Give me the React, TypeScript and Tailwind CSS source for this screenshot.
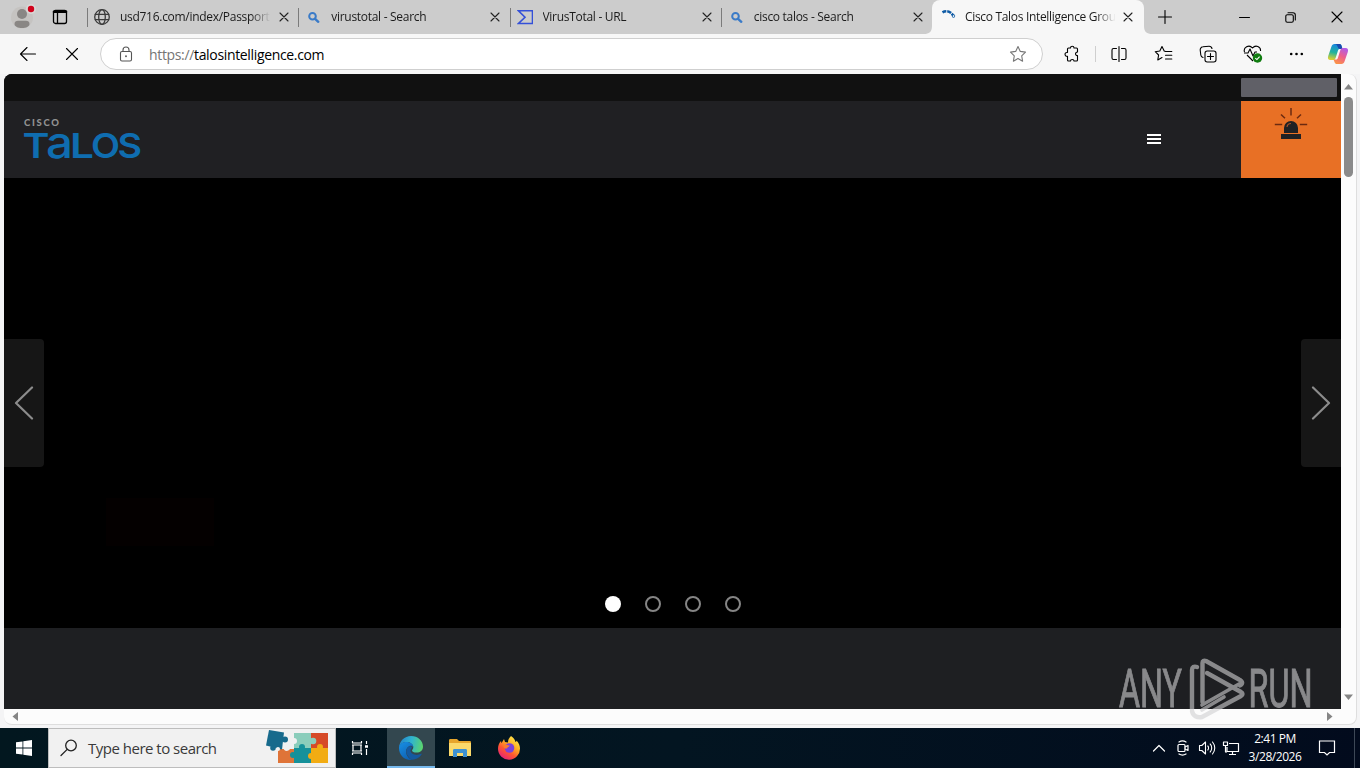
import type { ReactNode } from "react";

const tabs = [
  { title: "usd716.com/index/Passport/login", icon: "globe" },
  { title: "virustotal - Search", icon: "search" },
  { title: "VirusTotal - URL", icon: "vt" },
  { title: "cisco talos - Search", icon: "search" },
];

type LineProps = { w?: number; h?: number; sw?: number; className?: string; children: ReactNode };

// stroke icon, viewBox equals the pixel size
function Line({ w = 20, h = 20, sw = 1.1, className = "", children }: LineProps) {
  return (
    <svg
      width={w}
      height={h}
      viewBox={`0 0 ${w} ${h}`}
      fill="none"
      stroke="currentColor"
      strokeWidth={sw}
      strokeLinecap="round"
      strokeLinejoin="round"
      className={`shrink-0 ${className}`}
    >
      {children}
    </svg>
  );
}

function TabIcon({ name }: { name: string }) {
  if (name === "globe") {
    return (
      <Line w={16} h={16} sw={1.3} className="text-[#3b3b3b]">
        <circle cx="8" cy="8" r="7.3" />
        <ellipse cx="8" cy="8" rx="3.3" ry="7.3" />
        <path d="M1.3 5.4h13.4M1.3 10.6h13.4" />
      </Line>
    );
  }
  if (name === "search") {
    return (
      <Line w={16} h={16} sw={2} className="text-[#3a7bc8]">
        <circle cx="7.500" cy="7.200" r="3.300" />
        <path d="M10.100 9.800l3.200 3" strokeWidth="2.400" />
      </Line>
    );
  }
  return (
    <Line w={16} h={16} sw={1.6} className="text-[#3450d8]">
      <path d="M1.500 1.800h14v12.700h-14L8 8.200z" strokeLinejoin="miter" />
    </Line>
  );
}

function CloseX() {
  return (
    <Line w={10} h={10} className="text-[#222]">
      <path d="M1 1l8 8M9 1L1 9" />
    </Line>
  );
}

function TabStrip() {
  return (
    <div className="flex h-[34px] shrink-0 bg-[#cccccc]">
      <div className="flex w-[87px] shrink-0 items-center">
        <svg width="28" height="34" viewBox="0 0 28 34" className="ml-2">
          <circle cx="14" cy="17.5" r="11" fill="#c5c3c1" />
          <circle cx="14" cy="14" r="5" fill="#898684" />
          <path d="M6.500 24c0-2 1.500-3.200 3.500-3.200h8c2 0 3.500 1.200 3.500 3.200 0 2.500-3.500 4-7.500 4s-7.500-1.500-7.500-4z" fill="#898684" />
          <circle cx="23" cy="9" r="5" fill="#d9d7d5" />
          <circle cx="23" cy="9" r="3.2" fill="#d0021b" />
        </svg>
        <Line w={16} h={16} sw={1.3} className="ml-4 text-black">
          <rect x="1.500" y="1.500" width="13" height="13" rx="2" />
          <path d="M2 2.800h12" strokeWidth="2.600" />
          <path d="M5.500 4v10" />
        </Line>
      </div>

      {tabs.map((tab) => (
        <div key={tab.title} className="flex w-[211.25px] shrink-0 items-center">
          <div className="h-[19px] w-px bg-[#7b7b7b]" />
          <div className="ml-1.5 flex">
            <TabIcon name={tab.icon} />
          </div>
          <div className="ml-2.5 w-[152px] overflow-hidden text-[12px] tracking-[-0.29px] whitespace-nowrap text-[#1b1b1b] [mask-image:linear-gradient(to_right,black_86%,transparent_99%)]">
            {tab.title}
          </div>
          <div className="ml-[7px]">
            <CloseX />
          </div>
        </div>
      ))}

      <svg width="8" height="34" viewBox="0 0 8 34" className="-ml-2 shrink-0">
        <path d="M0 34c5 0 8-2 8-8v8z" fill="#f7f7f7" />
      </svg>
      <div className="flex w-[212px] shrink-0 items-center rounded-t-lg bg-[#f7f7f7]">
        <Line w={16} h={16} sw={2.6} className="ml-2 text-[#0f5ba5]">
          <path d="M2.500 3.300a7.500 7.500 0 0 1 10.500 3" strokeDasharray="4 .9" strokeLinecap="butt" />
          <circle cx="13.500" cy="7" r=".4" />
        </Line>
        <div className="ml-[9px] w-[152px] overflow-hidden text-[12px] tracking-[-0.32px] whitespace-nowrap text-[#1b1b1b] [mask-image:linear-gradient(to_right,black_86%,transparent_99%)]">
          Cisco Talos Intelligence Group
        </div>
        <div className="ml-1.5">
          <CloseX />
        </div>
      </div>
      <svg width="8" height="34" viewBox="0 0 8 34" className="shrink-0">
        <path d="M8 34c-5 0-8-2-8-8v8z" fill="#f7f7f7" />
      </svg>

      <div className="flex flex-1 items-center text-black">
        <Line w={14} h={14} className="ml-1.5">
          <path d="M7 .5v13M.5 7h13" />
        </Line>
        <div className="ml-auto flex items-center gap-[35px] pr-[17px]">
          <Line w={11} h={11} sw={1}>
            <path d="M.5 5.500h10" />
          </Line>
          <Line w={11} h={11} sw={1.1}>
            <rect x=".8" y="2.800" width="7.500" height="7.500" rx="1.500" />
            <path d="M3 .8h5a2.300 2.300 0 0 1 2.300 2.300V8" />
          </Line>
          <Line w={12} h={12} sw={1.1}>
            <path d="M1 1l10 10M11 1L1 11" />
          </Line>
        </div>
      </div>
    </div>
  );
}

function CopilotIcon() {
  return (
    <svg width="24" height="24" viewBox="0 0 24 24" fill="none" className="shrink-0">
      <defs>
        <linearGradient id="cpA" x1="8" y1="2" x2="5" y2="17" gradientUnits="userSpaceOnUse">
          <stop stopColor="#1989e0" />
          <stop offset=".55" stopColor="#22b39c" />
          <stop offset="1" stopColor="#d6cf35" />
        </linearGradient>
        <linearGradient id="cpB" x1="20" y1="7" x2="12" y2="22" gradientUnits="userSpaceOnUse">
          <stop stopColor="#b05be8" />
          <stop offset=".5" stopColor="#ee5e8b" />
          <stop offset="1" stopColor="#fb9448" />
        </linearGradient>
      </defs>
      <path d="M16.500 7L15.600 4C15.200 2.600 14.500 2 13.200 2H8.500C6.900 2 6 3 5.400 4.800L2.200 14c-.8 2.500.1 4 2.300 4H7c1.500 0 2.300-1 2.800-2.600L12 8.500C12.400 7.300 13 7 14 7z" fill="url(#cpA)" />
      <path d="M8.500 2h4.700c1.300 0 2 .6 2.400 2l.9 3H14c-1.200 0-1.700-.2-2.200-1.900L11.300 4C10.900 2.700 10 2 8.500 2z" fill="#1b4aad" />
      <path d="M7.500 17.500l1 2.500c.5 1.400 1.200 2 2.500 2h4.500c1.600 0 2.500-1 3.100-2.800l3.200-9.200c.8-2.500-.1-4-2.300-4H17c-1.500 0-2.300 1-2.800 2.600L12 15.500c-.4 1.500-1 2-2 2z" fill="url(#cpB)" />
    </svg>
  );
}

function Toolbar() {
  return (
    <div className="flex h-10 shrink-0 items-center bg-[#f7f7f7] text-[#1b1b1b]">
      <Line w={18} h={16} sw={1.1} className="ml-[19px] text-black">
        <path d="M1.500 8h15M8 1.500L1.500 8 8 14.500" />
      </Line>
      <Line w={14} h={14} sw={1.1} className="ml-7 text-black">
        <path d="M1.500 1.500l11 11M12.500 1.500l-11 11" />
      </Line>
      <div className="ml-[21px] flex h-8 w-[943px] shrink-0 items-center rounded-full border border-[#cfcfcf] bg-white">
        <Line w={14} h={16} className="ml-[18px] text-[#555]">
          <rect x="1.500" y="5.500" width="11" height="9.500" rx="1.500" />
          <path d="M4 5.500V4a3 3 0 0 1 6 0v1.500" />
          <circle cx="7" cy="10.200" r=".4" />
        </Line>
        <div className="ml-4 text-[14px] tracking-[-0.34px] text-black">
          <span className="text-[#757575]">https://</span>talosintelligence.com
        </div>
        <Line w={18} h={18} className="mr-[15px] ml-auto text-[#777]">
          <path d="M9 1.500l2.300 4.900 5.200.7-3.800 3.700.9 5.400L9 13.600l-4.600 2.600.9-5.400-3.800-3.700 5.200-.7z" />
        </Line>
      </div>

      <Line w={18} h={18} className="ml-5 text-black">
        <path d="M5.500 3h2c0-2.300 3.500-2.300 3.500 0h2.500a1 1 0 0 1 1 1v3c-2.600-.2-2.600 3.800 0 3.600V15a1 1 0 0 1-1 1H11c0-2-3.500-2-3.500 0h-2a1 1 0 0 1-1-1v-3.800c-3.300.6-3.300-4.300 0-3.700V4a1 1 0 0 1 1-1z" />
      </Line>
      <div className="ml-3.5 h-4 w-px bg-[#cfcfcf]" />
      <Line w={18} h={18} className="ml-3.5 text-black">
        <path d="M6.500 3.500h-3a1.500 1.500 0 0 0-1.500 1.500v8a1.500 1.500 0 0 0 1.500 1.500h3M11.500 3.500h3A1.500 1.500 0 0 1 16 5v8a1.500 1.500 0 0 1-1.500 1.500h-3M9 1.500v15" />
      </Line>
      <Line w={20} h={18} className="ml-[26px] text-black">
        <path d="M11.500 6.500L10.200 6 8 1.500 5.800 6l-4.600.7 3.400 3.300-.8 4.900L8 12.600M11.500 6.500h6.300M11.500 10.300h6.300M11.500 14h6.300" />
      </Line>
      <Line w={18} h={18} className="ml-[25px] text-black">
        <rect x="6" y="6" width="11" height="11" rx="2.200" />
        <path d="M11.500 8.500v6M8.500 11.500h6M4 12.500A3 3 0 0 1 1.800 10L1.200 5A3 3 0 0 1 4 1.800l6-.6a3 3 0 0 1 3 2.300" />
      </Line>
      <svg width="20" height="20" viewBox="0 0 20 20" fill="none" stroke="black" strokeWidth="1.1" className="ml-[26px] shrink-0">
        <path d="M1.500 8C0 3.500 6 0 9.500 4c3-3.500 8.500-1.500 8 3M4 11l6 6M1 9h4l2-4 3 7 2-4h2" strokeLinejoin="round" />
        <circle cx="14.500" cy="14" r="4.700" fill="#107c10" stroke="none" />
        <path d="M12.300 14.200l1.600 1.400 2.700-3" stroke="white" />
      </svg>
      <svg width="16" height="4" viewBox="0 0 16 4" className="ml-[26px] shrink-0">
        <circle cx="2.200" cy="2" r="1.300" />
        <circle cx="7.500" cy="2" r="1.300" />
        <circle cx="12.800" cy="2" r="1.300" />
      </svg>
      <div className="ml-[21px]">
        <CopilotIcon />
      </div>
    </div>
  );
}

function TalosLogo() {
  return (
    <svg width="120" height="60" viewBox="0 0 120 60" className="mt-[15px] ml-5 shrink-0 overflow-visible font-['Inter',sans-serif]">
      <text x="0" y="9.500" fontSize="9.500" fontWeight="900" fill="#929292" textLength="35" className="font-['Lato',sans-serif]">
        CISCO
      </text>
      <g fill="#0f6db0" fontSize="34.500" fontWeight="600">
        <text x="-1.500" y="42" textLength="27" lengthAdjust="spacingAndGlyphs">T</text>
        <text x="22" y="42" fontSize="44" fontWeight="500" textLength="27" lengthAdjust="spacingAndGlyphs">a</text>
        <text x="46" y="42" textLength="24" lengthAdjust="spacingAndGlyphs">L</text>
        <text x="67" y="42" textLength="29" lengthAdjust="spacingAndGlyphs">O</text>
        <text x="93.500" y="42" textLength="24.500" lengthAdjust="spacingAndGlyphs">S</text>
      </g>
    </svg>
  );
}

function Siren() {
  return (
    <svg width="34" height="34" viewBox="0 0 34 34" className="mt-1.5">
      <path d="M17 1v7.500M7 7.500l4 3.700M27 7.500l-4 3.700M.8 17.500h7.400M25.800 17.500h7.400" stroke="#6b2a10" strokeWidth="1.500" />
      <path d="M10 26V21a7 7 0 0 1 14 0v5zM7 27h20v5H7z" fill="#202124" />
      <path d="M13 20a4 4 0 0 1 4-3.500" stroke="#a5522a" strokeWidth="1.200" fill="none" />
    </svg>
  );
}

function Arrow({ dir }: { dir: "left" | "right" }) {
  return (
    <div className={`flex h-32 w-10 items-center justify-center bg-[#161616] ${dir === "left" ? "rounded-r" : "rounded-l"}`}>
      <Line w={20} h={34} sw={2.2} className="text-[#8c8c8c]">
        <path d={dir === "left" ? "M18 1.500L2 17l16 15.500" : "M2 1.500L18 17 2 32.500"} />
      </Line>
    </div>
  );
}

function Page() {
  return (
    <div className="flex w-[1337px] shrink-0 flex-col overflow-hidden rounded-tl-lg bg-black">
      <div className="flex h-[27px] shrink-0 justify-end bg-[#111111] pt-1 pr-1">
        <div className="h-[19px] w-24 rounded-[1px] bg-[#606067]" />
      </div>
      <div className="flex h-[77px] shrink-0 bg-[#202023]">
        <TalosLogo />
        <div className="mt-[33px] mr-20 ml-auto flex w-3.5 flex-col gap-0.5">
          <div className="h-0.5 bg-white" />
          <div className="h-0.5 bg-white" />
          <div className="h-0.5 bg-white" />
        </div>
        <div className="flex w-[100px] justify-center bg-[#e87025]">
          <Siren />
        </div>
      </div>
      <div className="flex h-[450px] shrink-0 flex-col">
        <div className="mt-[161px] flex justify-between">
          <Arrow dir="left" />
          <Arrow dir="right" />
        </div>
        <div className="mt-[31px] ml-[102px] h-12 w-[108px] bg-[#040000]" />
        <div className="mt-[50px] flex justify-center gap-6">
          <div className="size-4 rounded-full bg-white" />
          <div className="size-4 rounded-full border-2 border-[#858585]" />
          <div className="size-4 rounded-full border-2 border-[#858585]" />
          <div className="size-4 rounded-full border-2 border-[#858585]" />
        </div>
      </div>
      <div className="h-[81px] shrink-0 bg-[#1e1f22]" />
    </div>
  );
}

function Watermark() {
  return (
    <svg
      width="196"
      height="66"
      viewBox="0 0 196 66"
      className="absolute top-[656px] left-[1117px] overflow-visible font-['Roboto',sans-serif] opacity-60"
    >
      <g fill="#d0d0d2" stroke="#d0d0d2" strokeWidth="1" fontSize="53">
        <text x="2" y="51" textLength="63" lengthAdjust="spacingAndGlyphs">ANY</text>
        <text x="131.500" y="51" textLength="64" lengthAdjust="spacingAndGlyphs">RUN</text>
      </g>
      <g fill="none" stroke="#d0d0d2" strokeWidth="4.400" strokeLinejoin="round" strokeLinecap="round">
        <path d="M80 11c-3-1-5 0-5 3v39" />
        <path d="M85.500 46V7c0-2 1.500-3 3.500-2L122 23.500c4 2 4 4 1 6" />
        <path d="M90 17l34 19c2 1 2 3 0 4L85 61c-5 1-9-1-10-6" />
        <path d="M85 49l37-21M85 54l22-13" strokeWidth="3.600" />
      </g>
    </svg>
  );
}

function Browser() {
  return (
    <div className="h-[654px] shrink-0 bg-[#f4f4f5] pl-1">
      <div className="flex h-[651px] w-[1353px] flex-col rounded-lg border-r border-b border-[#dedede] bg-[#fcfcfc]">
        <div className="flex h-[635px]">
          <Page />
          <div className="flex flex-1 flex-col items-center pt-[10px] pb-[9px]">
            <svg width="9" height="6" viewBox="0 0 9 6" fill="#858585">
              <path d="M4.500 0L9 5.500H0z" />
            </svg>
            <div className="mt-[7px] h-20 w-[9px] rounded-full bg-[#8b8b8b]" />
            <svg width="9" height="6" viewBox="0 0 9 6" fill="#858585" className="mt-auto">
              <path d="M0 .5h9L4.500 6z" />
            </svg>
          </div>
        </div>
        <div className="flex flex-1 items-center pr-[23px] pl-2">
          <svg width="6" height="9" viewBox="0 0 6 9" fill="#858585">
            <path d="M6 0v9L.5 4.500z" />
          </svg>
          <svg width="6" height="9" viewBox="0 0 6 9" fill="#858585" className="ml-auto">
            <path d="M0 0v9l5.500-4.500z" />
          </svg>
        </div>
      </div>
    </div>
  );
}

function Puzzle() {
  return (
    <svg width="64" height="36" viewBox="0 0 64 36" className="shrink-0 overflow-visible">
      <path d="M12 20h17v14H12z" fill="#df7438" />
      <path d="M28 4h17v15H28z" fill="#8bcdbb" />
      <path d="M45 4h17v15H45z" fill="#d64a27" />
      <path d="M28 19h17v15H28z" fill="#16919a" />
      <path d="M45 19h17v15H45z" fill="#f2ac13" />
      <circle cx="47" cy="12" r="3.300" fill="#8bcdbb" />
      <circle cx="36" cy="18" r="3" fill="#16919a" />
      <circle cx="54" cy="18" r="3" fill="#f2ac13" />
      <circle cx="45" cy="27" r="3" fill="#f2ac13" />
      <circle cx="27" cy="26" r="3" fill="#16919a" />
      <circle cx="28" cy="12" r="3" fill="#f1f1f1" />
      <path d="M17 18c1 5 5 5 8 1z" fill="#f1f1f1" />
      <g fill="#176a8c">
        <path d="M3 1l15 2.500-2 17-16-4z" />
        <circle cx="19" cy="10.500" r="3" />
        <circle cx="7" cy="19" r="2.800" />
      </g>
      <circle cx="12" cy="20" r="2" fill="#f1f1f1" />
    </svg>
  );
}

function EdgeIcon() {
  return (
    <svg width="24" height="24" viewBox="0 0 24 24">
      <defs>
        <linearGradient id="edgeTop" x1="0" y1="5" x2="24" y2="10" gradientUnits="userSpaceOnUse">
          <stop stopColor="#2383cd" />
          <stop offset=".5" stopColor="#30b4cf" />
          <stop offset="1" stopColor="#5cd66b" />
        </linearGradient>
        <linearGradient id="edgeLow" x1="2" y1="10" x2="12" y2="24" gradientUnits="userSpaceOnUse">
          <stop stopColor="#1686da" />
          <stop offset="1" stopColor="#0d5cae" />
        </linearGradient>
      </defs>
      <path d="M0 11.500C.5 5 5.500 0 12 0c7 0 12 5 12 10.500 0 4-3 6-6.200 6-3 0-4.800-1-4.800-2.100 0-.8 1.300-1.200 1.300-3.200C14.300 8 11 6 7.500 6 3.500 6 .8 8.500 0 11.500z" fill="url(#edgeTop)" />
      <path d="M0 12c0-3.500 3-6 7.500-6 4 0 6.800 2.500 6.800 5.200-1-1.500-2.300-1.700-3.300-1.500C8.500 10.500 7 13 7 15.500c0 4 3 7.500 6.500 8.300C6 25 0 19.500 0 12z" fill="url(#edgeLow)" />
      <path d="M10 10.500C6.500 12.500 6.500 17 9 20c1.500 2.500 3 3.500 4.500 3.800 3.500 0 7-2 9-5.200.5-.7.200-1.200-.5-.8-4 2.200-10 1-10.500-3-.2-1.500 1.500-2.300 1.500-3.800-1-1-2-1-3-.5z" fill="#1459a0" />
    </svg>
  );
}

function FirefoxIcon() {
  return (
    <svg width="24" height="24" viewBox="0 0 24 24">
      <defs>
        <linearGradient id="fox" x1="19" y1="2" x2="5" y2="22" gradientUnits="userSpaceOnUse">
          <stop stopColor="#ffe64a" />
          <stop offset=".35" stopColor="#ffad23" />
          <stop offset=".65" stopColor="#ff5631" />
          <stop offset="1" stopColor="#e52178" />
        </linearGradient>
      </defs>
      <path d="M14 0c3 2 4 4 4.500 6 1-.2 1-1 1-1.500 2.500 2.500 3.500 5.500 3.500 8A11 11 0 0 1 1 13c0-3 .8-6 3-8l.5 2.200L7 3l1 3 3 .5C11 4 12 2 14 0z" fill="url(#fox)" />
      <circle cx="12.500" cy="12" r="4.800" fill="#7b42db" />
      <path d="M6.500 9.500c1.500-1.500 3-1.200 4.200-.3l2 .4c-.3 1.200-1.200 1.300-2.200 2 0 .5-.5 1-1.500 1-1.500 0-2.500-1-2.500-3.100z" fill="#ff7c2a" />
    </svg>
  );
}

function Taskbar() {
  return (
    <div className="flex h-10 shrink-0 items-center bg-linear-to-r from-[#02171f] via-[#031521] to-[#020b1d] text-white">
      <div className="flex w-12 justify-center">
        <svg width="16" height="16" viewBox="0 0 16 16" fill="white">
          <path d="M0 2.300L6.500 1.400v6.200H0zM7.300 1.300L16 0v7.600H7.300zM0 8.400h6.500v6.200L0 13.700zM7.300 8.400H16V16l-8.700-1.300z" />
        </svg>
      </div>
      <div className="flex h-10 w-72 shrink-0 items-center border border-[#bdbdbd] bg-[#f1f1f1]">
        <Line w={18} h={18} sw={1.3} className="ml-[11px] text-[#222]">
          <circle cx="11" cy="6.500" r="5.300" />
          <path d="M7.200 10.400L1 16.500" />
        </Line>
        <div className="ml-2.5 w-[178px] text-[15px] tracking-[-0.5px] whitespace-nowrap text-[#3a3a3a]">Type here to search</div>
        <div className="-mt-0.5">
          <Puzzle />
        </div>
      </div>
      <div className="flex w-[51px] shrink-0 justify-center">
        <Line w={18} h={16} sw={1.2} className="mr-[3px]">
          <path d="M1.500 1v2h9V1M1.500 15v-2h9v2M2 5v6M10 5v6M1 5h10M1 11h10M15.500 1v3M15.500 9v6" strokeLinecap="butt" />
          <path d="M14 6.500h3" strokeWidth="2.500" strokeLinecap="butt" />
        </Line>
      </div>
      <div className="flex h-10 w-12 shrink-0 items-center justify-center border-b-2 border-[#76b9ed] bg-[#33474f] pt-0.5">
        <EdgeIcon />
      </div>
      <svg width="22" height="18" viewBox="0 0 22 18" className="ml-3.5 shrink-0">
        <path d="M0 1.500C0 .5.500 0 1.500 0H8l2 2h10.500c1 0 1.500.5 1.500 1.300V17H0z" fill="#e7a52c" />
        <path d="M0 4h22v13H0z" fill="#fbd96b" />
        <path d="M4 18v-6.500C4 10.500 4.500 10 5.500 10h11c1 0 1.500.5 1.500 1.500V18h-4v-4H8v4z" fill="#3e91d1" />
      </svg>
      <div className="ml-[26px]">
        <FirefoxIcon />
      </div>

      <div className="ml-auto flex items-center">
        <Line w={14} h={8} sw={1.2}>
          <path d="M1.500 7L7 1.500 12.500 7" />
        </Line>
        <Line w={14} h={16} sw={1.2} className="ml-2.5">
          <rect x="2" y="4.500" width="7" height="7" rx="1" />
          <path d="M9 7l3-1.500v5L9 9M3 2c2-1.200 5-1.200 7 0M3 14c2 1.200 5 1.200 7 0" />
        </Line>
        <Line w={18} h={16} className="ml-2">
          <path d="M1.500 5.500h2.300L7.500 2v12l-3.700-3.500H1.500zM9.800 6c1 1 1 3 0 4M12.200 4c2 2 2 6 0 8M14.500 2c3 3.500 3 8.500 0 12" />
        </Line>
        <Line w={18} h={16} sw={1.2} className="ml-1.5">
          <path d="M7 3.500h9.500v8H5V7M1.500 2h4v3.500h-4zM3.500 5.500V12H5M10.500 11.500V14M7 14.500h7" strokeLinecap="butt" />
        </Line>
        <div className="ml-2 w-[54px] text-center text-[12px] leading-[18px] tracking-[-0.45px] whitespace-nowrap">
          <div>2:41 PM</div>
          <div>3/28/2026</div>
        </div>
        <Line w={18} h={18} sw={1.2} className="ml-4">
          <path d="M1.500 2h15v11.500h-5L9 16l-2.500-2.500h-5z" strokeLinejoin="miter" />
        </Line>
        <div className="ml-[18px] h-10 w-px bg-[#3d4856]" />
        <div className="w-[5px]" />
      </div>
    </div>
  );
}

export default function App() {
  return (
    <div className="relative flex h-[768px] w-[1360px] flex-col overflow-hidden font-['Open_Sans','Noto_Sans',sans-serif]">
      <TabStrip />
      <Toolbar />
      <Browser />
      <Taskbar />
      <Watermark />
    </div>
  );
}
